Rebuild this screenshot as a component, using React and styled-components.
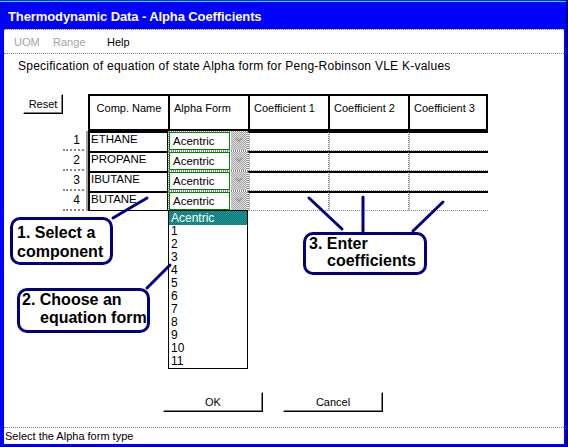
import React from 'react';
import styled, { createGlobalStyle } from 'styled-components';

const GlobalStyle = createGlobalStyle`
  html, body { margin: 0; padding: 0; background: #ffffff; }
  body { font-family: "Liberation Sans", Arial, sans-serif; color: #000; }
`;

const Window = styled.div`
  width: 568px;
  height: 447px;
  box-sizing: border-box;
  padding: 0 4px 3px 4px;
  background: #0000ff;
  box-shadow: inset -2px 0 0 #000080, inset 0 -1px 0 #000080,
    inset 0 1px 0 #0000ff, inset 0 2px 0 #00ffff;
  display: flex;
  flex-direction: column;
`;

const TitleBar = styled.div`
  height: 29px;
  box-sizing: border-box;
  padding: 3px 0 0 4px;
  display: flex;
  align-items: center;
  color: #ffffff;
  font-size: 13px;
  font-weight: bold;
  letter-spacing: -0.1px;
`;

const Client = styled.div`
  flex: 1;
  background: #ffffff;
  border-top: 1px dotted #808080;
  display: flex;
  flex-direction: column;
  min-height: 0;
`;

const MenuBar = styled.div`
  height: 23px;
  border-bottom: 1px dotted #808080;
  display: flex;
  align-items: center;
  padding-left: 10px;
  font-size: 11px;
`;

const MenuItem = styled.span`
  width: ${p => p.$w}px;
  color: ${p => (p.$disabled ? '#a4a4a4' : '#000')};
`;

const Content = styled.div`
  flex: 1;
  position: relative;
  display: flex;
  flex-direction: column;
`;

const Description = styled.div`
  padding: 5px 0 0 14px;
  height: 14px;
  line-height: 14px;
  font-size: 12px;
  letter-spacing: 0.25px;
`;

const Grid = styled.div`
  margin: 21px 0 0 19px;
  display: grid;
  grid-template-columns: 40px 25px 80px 80px 80px 80px 80px;
  grid-template-rows: 37px repeat(4, 20px);
  font-size: 11px;
`;

const WinButton = styled.button`
  width: ${p => p.$w}px;
  height: 20px;
  padding: 0;
  box-sizing: border-box;
  background: #ffffff;
  border: 1px solid;
  border-color: #ffffff #000000 #000000 #ffffff;
  box-shadow: inset -1px -1px 0 #808080;
  font-family: "Liberation Sans", Arial, sans-serif;
  font-size: 11px;
  color: #000;
`;

const ResetButton = styled(WinButton)`
  align-self: start;
`;

const HeadCell = styled.div`
  box-sizing: border-box;
  border: 2px solid #000;
  border-right: ${p => (p.$last ? '2px solid #000' : 'none')};
  padding-top: 6px;
  text-align: ${p => (p.$center ? 'center' : 'left')};
  padding-left: ${p => (p.$center ? 0 : 4)}px;
`;

const RowNum = styled.div`
  box-sizing: border-box;
  border-bottom: 2px dotted #8a8a8a;
  text-align: right;
  padding-right: 8px;
  line-height: 18px;
  font-size: 12px;
`;

const NameCell = styled.div`
  box-sizing: border-box;
  border-top: 2px solid #000;
  border-left: 2px solid #000;
  border-right: 1px solid #000;
  border-bottom: ${p => (p.$last ? '1px solid #000' : 'none')};
  box-shadow: -2px 0 0 #a0a0a0;
  padding: 0 0 0 1px;
  line-height: 13px;
  font-size: 11.5px;
`;

const AlphaCell = styled.div`
  position: relative;
  box-sizing: border-box;
  border: 1px dotted #8a8a8a;
  display: flex;
  gap: 1px;
`;

const AlphaInput = styled.div`
  width: 61px;
  box-sizing: border-box;
  border: 1px solid #008000;
  padding-left: 3px;
  line-height: 16px;
  font-size: 11.5px;
`;

const DropButton = styled.div`
  flex: 1;
  display: flex;
  align-items: flex-start;
  justify-content: center;
  padding-top: 5px;
  background: repeating-conic-gradient(#a9a9a9 0 25%, #dcdcdc 0 50%) 0 0 / 2px 2px;
`;

const CoefCell = styled.div`
  box-sizing: border-box;
  border-top: 2px solid #000;
  border-left: 1px dotted #808080;
  border-bottom: 1px dotted #8a8a8a;
  box-shadow: inset 1px 0 0 #c8c8c8;
`;

const DropList = styled.div`
  position: absolute;
  left: -1px;
  top: 100%;
  width: 80px;
  height: 159px;
  box-sizing: border-box;
  border: 1px solid #000;
  background: #ffffff;
  z-index: 2;
  font-size: 12px;
`;

const ListItem = styled.div`
  height: ${p => (p.$selected ? 14 : 13)}px;
  line-height: ${p => (p.$selected ? 14 : 13)}px;
  padding-left: 2px;
  color: ${p => (p.$selected ? '#ffffff' : '#000')};
  background: ${p =>
    p.$selected
      ? 'repeating-conic-gradient(#007a7a 0 25%, #2a9494 0 50%) 0 0 / 2px 2px'
      : 'transparent'};
`;

const ButtonRow = styled.div`
  margin-top: 181px;
  padding-left: 159px;
  display: flex;
  gap: 20px;
`;

const StatusBar = styled.div`
  height: 16px;
  border-top: 1px dotted #808080;
  display: flex;
  align-items: center;
  padding-left: 1px;
  font-size: 11px;
`;

const Pointers = styled.svg`
  position: absolute;
  left: 0;
  top: 0;
  z-index: 3;
  pointer-events: none;
`;

const Callout = styled.div`
  position: absolute;
  left: ${p => p.$left}px;
  top: ${p => p.$top}px;
  width: ${p => p.$w}px;
  height: ${p => p.$h}px;
  box-sizing: border-box;
  border: 3px solid #000080;
  border-radius: 10px;
  background: #ffffff;
  padding: ${p => p.$pt}px 0 0 ${p => p.$pl}px;
  font-size: 16px;
  font-weight: bold;
  line-height: ${p => p.$lh}px;
  white-space: nowrap;
  z-index: 4;
`;

const CalloutLine = styled.div`
  padding-left: ${p => p.$indent || 0}px;
`;

const Chevron = () => (
  <svg width="8" height="6" viewBox="0 0 8 6">
    <polyline points="1,1 4,4 7,1" fill="none" stroke="#9a9a9a" strokeWidth="1.6" />
  </svg>
);

const components = ['ETHANE', 'PROPANE', 'IBUTANE', 'BUTANE'];
const forms = ['1', '2', '3', '4', '5', '6', '7', '8', '9', '10', '11'];

export default function App() {
  return (
    <>
      <GlobalStyle />
      <Window>
        <TitleBar>Thermodynamic Data - Alpha Coefficients</TitleBar>
        <Client>
          <MenuBar>
            <MenuItem $w={39} $disabled>UOM</MenuItem>
            <MenuItem $w={54} $disabled>Range</MenuItem>
            <MenuItem $w={40}>Help</MenuItem>
          </MenuBar>
          <Content>
            <Description>
              Specification of equation of state Alpha form for Peng-Robinson VLE K-values
            </Description>
            <Grid>
              <ResetButton $w={40}>Reset</ResetButton>
              <div />
              <HeadCell $center>Comp. Name</HeadCell>
              <HeadCell>Alpha Form</HeadCell>
              <HeadCell>Coefficient 1</HeadCell>
              <HeadCell>Coefficient 2</HeadCell>
              <HeadCell $last>Coefficient 3</HeadCell>
              {components.map((name, i) => {
                const last = i === components.length - 1;
                return (
                  <React.Fragment key={name}>
                    <div />
                    <RowNum>{i + 1}</RowNum>
                    <NameCell $last={last}>{name}</NameCell>
                    <AlphaCell>
                      <AlphaInput>Acentric</AlphaInput>
                      <DropButton>
                        <Chevron />
                      </DropButton>
                      {last && (
                        <DropList>
                          <ListItem $selected>Acentric</ListItem>
                          {forms.map(f => (
                            <ListItem key={f}>{f}</ListItem>
                          ))}
                        </DropList>
                      )}
                    </AlphaCell>
                    <CoefCell />
                    <CoefCell />
                    <CoefCell />
                  </React.Fragment>
                );
              })}
            </Grid>
            <ButtonRow>
              <WinButton $w={100}>OK</WinButton>
              <WinButton $w={100}>Cancel</WinButton>
            </ButtonRow>

            <Pointers width="560" height="373">
              <g stroke="#000080" strokeWidth="3" strokeLinecap="round">
                <line x1="109" y1="164" x2="143" y2="144" />
                <line x1="143" y1="234" x2="166" y2="211" />
                <line x1="305" y1="144" x2="338" y2="175" />
                <line x1="359" y1="143" x2="359" y2="177" />
                <line x1="439" y1="148" x2="409" y2="177" />
              </g>
            </Pointers>

            <Callout $left={6} $top={163} $w={103} $h={48} $pt={3} $pl={4} $lh={19}>
              <CalloutLine>1. Select a</CalloutLine>
              <CalloutLine>component</CalloutLine>
            </Callout>
            <Callout $left={13} $top={234} $w={133} $h={45} $pt={0} $pl={2} $lh={18}>
              <CalloutLine>2. Choose an</CalloutLine>
              <CalloutLine $indent={18}>equation form</CalloutLine>
            </Callout>
            <Callout $left={299} $top={178} $w={124} $h={43} $pt={0} $pl={3} $lh={17}>
              <CalloutLine>3. Enter</CalloutLine>
              <CalloutLine $indent={18}>coefficients</CalloutLine>
            </Callout>
          </Content>
          <StatusBar>Select the Alpha form type</StatusBar>
        </Client>
      </Window>
    </>
  );
}
